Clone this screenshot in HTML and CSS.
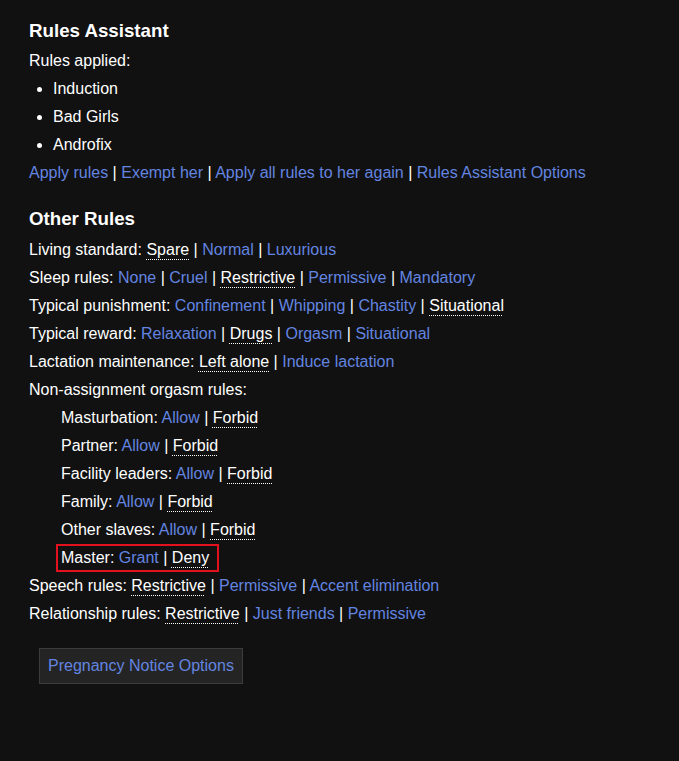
FILE: index.html
```html
<!DOCTYPE html>
<html>
<head>
<meta charset="utf-8">
<link rel="stylesheet" href="styles.css">
</head>
<body>
<div class="page">
  <h3 class="heading first">Rules Assistant</h3>
  <div class="line">Rules applied:</div>
  <ul class="rules">
    <li>Induction</li>
    <li>Bad Girls</li>
    <li>Androfix</li>
  </ul>
  <div class="line"><a>Apply rules</a> | <a>Exempt her</a> | <a>Apply all rules to her again</a> | <a>Rules Assistant Options</a></div>

  <h3 class="heading second">Other Rules</h3>
  <div class="line">Living standard: <span class="sel">Spare</span> | <a>Normal</a> | <a>Luxurious</a></div>
  <div class="line">Sleep rules: <a>None</a> | <a>Cruel</a> | <span class="sel">Restrictive</span> | <a>Permissive</a> | <a>Mandatory</a></div>
  <div class="line">Typical punishment: <a>Confinement</a> | <a>Whipping</a> | <a>Chastity</a> | <span class="sel">Situational</span></div>
  <div class="line">Typical reward: <a>Relaxation</a> | <span class="sel">Drugs</span> | <a>Orgasm</a> | <a>Situational</a></div>
  <div class="line">Lactation maintenance: <span class="sel">Left alone</span> | <a>Induce lactation</a></div>
  <div class="line">Non-assignment orgasm rules:</div>
  <div class="indent">
    <div class="line">Masturbation: <a>Allow</a> | <span class="sel">Forbid</span></div>
    <div class="line">Partner: <a>Allow</a> | <span class="sel">Forbid</span></div>
    <div class="line">Facility leaders: <a>Allow</a> | <span class="sel">Forbid</span></div>
    <div class="line">Family: <a>Allow</a> | <span class="sel">Forbid</span></div>
    <div class="line">Other slaves: <a>Allow</a> | <span class="sel">Forbid</span></div>
    <div class="line"><span class="highlight">Master: <a>Grant</a> | <span class="sel">Deny</span></span></div>
  </div>
  <div class="line">Speech rules: <span class="sel">Restrictive</span> | <a>Permissive</a> | <a>Accent elimination</a></div>
  <div class="line">Relationship rules: <span class="sel">Restrictive</span> | <a>Just friends</a> | <a>Permissive</a></div>

  <div class="actions"><button class="btn">Pregnancy Notice Options</button></div>
</div>
</body>
</html>
```

FILE: styles.css
```css
html, body {
  margin: 0;
  padding: 0;
  background: #111111;
}
body {
  color: #ffffff;
  font-family: "Liberation Sans", Arial, sans-serif;
  font-size: 16px;
  line-height: 28px;
}
.page {
  padding: 17px 30px 40px 29px;
}
.heading {
  margin: 0;
  font-size: 18.72px;
  font-weight: bold;
  line-height: 28px;
}
.heading.first {
  margin-bottom: 2px;
}
.heading.second {
  margin-top: 18px;
  margin-bottom: 3px;
}
.line {
  height: 28px;
  white-space: nowrap;
}
a {
  color: #6385e0;
  cursor: pointer;
}
.sel {
  text-decoration: underline dotted #ffffff;
  text-decoration-thickness: 1px;
  text-underline-offset: 4px;
}
.rules {
  margin: 0;
  padding-left: 24px;
}
.rules li {
  height: 28px;
}
.indent {
  padding-left: 32px;
}
.highlight {
  display: inline-block;
  margin: 2px 0 2px -3px;
  padding: 0 8px 0 3px;
  line-height: 24px;
  outline: 2px solid #e3101e;
}
.actions {
  padding-top: 20px;
  padding-left: 10px;
}
.btn {
  font-family: "Liberation Sans", Arial, sans-serif;
  font-size: 16px;
  line-height: 18px;
  color: #6385e0;
  background: #242424;
  border: 1px solid #3c3c3c;
  padding: 8px 8px;
  margin: 0;
}
```
